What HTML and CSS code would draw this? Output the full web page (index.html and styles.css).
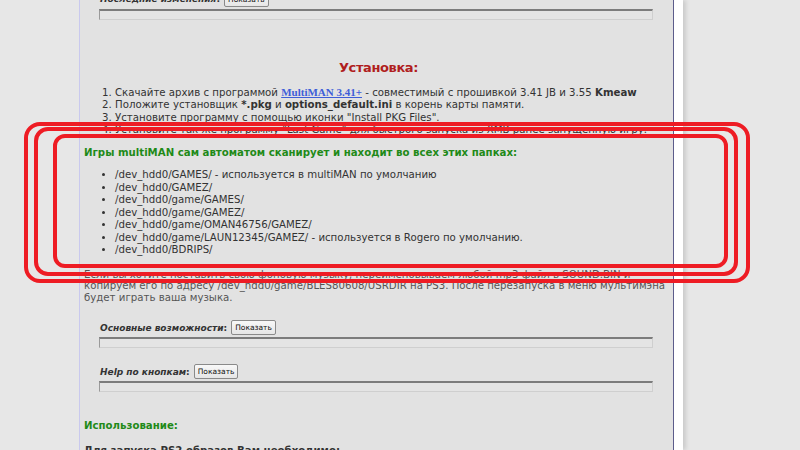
FILE: index.html
```html
<!DOCTYPE html>
<html lang="ru">
  <head>
    <meta charset="UTF-8" />
    <title>multiMAN | Установка</title>
    <link rel="stylesheet" href="styles.css">
  </head>
  <body>
    <div class="page">
      <div class="gutter"></div>
      <div class="content">
        <div class="spoiler spoiler-first">
          <div class="spoiler-head">
            <span class="spoiler-title">Последние изменения</span>:
            <button class="spoiler-btn">Показать</button>
          </div>
          <div class="spoiler-body"></div>
        </div>

        <h2 class="title-red">Установка:</h2>
        <ol class="steps">
          <li>Скачайте архив с программой <a href="#" class="serif-link">MultiMAN 3.41+</a> - совместимый с прошивкой 3.41 JB и 3.55 <b>Kmeaw</b></li>
          <li>Положите установщик <b>*.pkg</b> и <b>options_default.ini</b> в корень карты памяти.</li>
          <li>Установите программу с помощью иконки "Install PKG Files".</li>
          <li>Установите так же программу "Last Game" для быстрого запуска из XMB ранее запущенную игру.</li>
        </ol>

        <p class="title-green">Игры multiMAN сам автоматом сканирует и находит во всех этих папках:</p>
        <ul class="paths">
          <li>/dev_hdd0/GAMES/ - используется в multiMAN по умолчанию</li>
          <li>/dev_hdd0/GAMEZ/</li>
          <li>/dev_hdd0/game/GAMES/</li>
          <li>/dev_hdd0/game/GAMEZ/</li>
          <li>/dev_hdd0/game/OMAN46756/GAMEZ/</li>
          <li>/dev_hdd0/game/LAUN12345/GAMEZ/ - используется в Rogero по умолчанию.</li>
          <li>/dev_hdd0/BDRIPS/</li>
        </ul>

        <p class="note"><span class="note-line">Если вы хотите поставить свою фоновую музыку, переименовываем любой mp3 файл в SOUND.BIN и</span><br><span class="note-line">копируем его по адресу /dev_hdd0/game/BLES80608/USRDIR на PS3. После перезапуска в меню мультимэна</span><br>будет играть ваша музыка.</p>

        <div class="spoiler spoiler-mid">
          <div class="spoiler-head">
            <span class="spoiler-title">Основные возможности</span>:
            <button class="spoiler-btn">Показать</button>
          </div>
          <div class="spoiler-body"></div>
        </div>

        <div class="spoiler spoiler-mid">
          <div class="spoiler-head">
            <span class="spoiler-title">Help по кнопкам</span>:
            <button class="spoiler-btn">Показать</button>
          </div>
          <div class="spoiler-body"></div>
        </div>

        <p class="title-green title-use">Использование:</p>
        <p class="title-dark">Для запуска PS2 образов Вам необходимо:</p>
      </div>
      <div class="rail"></div>
    </div>

    <!-- red marker frames drawn over the page -->
    <svg class="marks" width="800" height="450" viewBox="0 0 800 450">
      <rect x="26" y="124" width="722" height="157" rx="14" />
      <rect x="36" y="129" width="700" height="145" rx="12" />
      <rect x="55" y="136" width="671" height="130" rx="10" />
    </svg>
  </body>
</html>
```

FILE: styles.css
```css
html, body {
  margin: 0;
  height: 100%;
  overflow: hidden;
}
body {
  background: #e7e7e7;
  font-family: "DejaVu Sans", Verdana, sans-serif;
  font-size: 10.2px;
  line-height: 12.3px;
  color: #333;
  position: relative;
}
.page {
  display: flex;
  height: 450px;
}
.gutter {
  width: 79px;
  flex: none;
}
.content {
  width: 589px;
  flex: none;
  background: #e2e2e2;
  border-left: 1px solid #c9c9ee;
  border-right: 1px solid #5d5d8c;
  padding: 0 0 0 4px;
  margin-top: -8px;
}
.rail {
  width: 9px;
  flex: none;
  background: #fff;
  box-shadow: 3px 0 4px rgba(0, 0, 0, 0.12);
}

/* spoiler blocks */
.spoiler {
  padding-left: 15px;
  padding-right: 20px;
}
.spoiler-head {
  display: flex;
  align-items: center;
  height: 15px;
  padding-left: 1px;
  font-size: 9px;
  font-weight: bold;
}
.spoiler-title {
  font-style: italic;
}
.spoiler-btn {
  margin-left: 4px;
  height: 15px;
  padding: 0 3px;
  font-family: "DejaVu Sans", Tahoma, sans-serif;
  font-size: 7.5px;
  font-weight: normal;
  color: #111;
  background: linear-gradient(#f8f8f8, #e6e6e6);
  border: 1px solid #8a8a8a;
  border-radius: 2px;
}
.spoiler-body {
  margin-top: 2px;
  height: 8px;
  background: #e4e4e4;
  border: 1px solid #cfcfcf;
  border-top: 2px solid #7c7c7c;
  border-left-color: #9a9a9a;
}
.spoiler-mid {
  margin-top: 17px;
}
.spoiler-mid + .spoiler-mid {
  margin-top: 16px;
}

/* headings */
.title-red {
  margin: 39px 0 0;
  text-align: center;
  font-size: 13px;
  line-height: 18px;
  letter-spacing: -0.4px;
  color: #b01e1e;
}
.title-green {
  margin: 11px 0 0;
  font-weight: bold;
  color: #1f8a18;
}
.title-use {
  margin-top: 28px;
}
.title-dark {
  margin: 12px 0 0;
  font-weight: bold;
  color: #333;
}

/* lists */
.steps {
  margin: 9px 0 0;
  padding-left: 31px;
}
.serif-link {
  font-family: "Liberation Serif", "Times New Roman", serif;
  font-weight: bold;
  font-size: 11px;
  color: #3e5ed8;
}
.paths {
  margin: 10px 0 0;
  padding-left: 31px;
  line-height: 12.45px;
}
.note {
  margin: 12px 0 0;
  color: #555;
  line-height: 11.6px;
}
.note-line {
  white-space: nowrap;
}

.marks {
  position: absolute;
  left: 0;
  top: 0;
  pointer-events: none;
}
.marks rect {
  fill: none;
  stroke: #ee1c24;
  stroke-width: 4;
}
```
